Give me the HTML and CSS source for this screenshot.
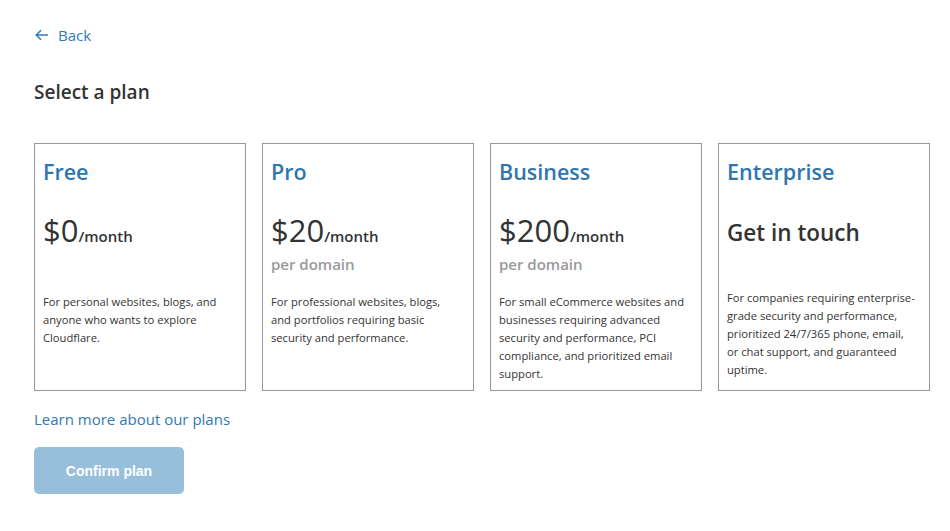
FILE: index.html
```html
<!DOCTYPE html>
<html lang="en">
<head>
    <meta charset="UTF-8">
    <title>Select a plan</title>
    <link rel="stylesheet" href="styles.css">
</head>
<body>
    <div class="page">
        <a class="back" href="#">
            <svg width="14" height="12" viewBox="0 0 14 12"><path d="M6 1.2L1.2 6L6 10.8M1.2 6H13" fill="none" stroke="currentColor" stroke-width="1.5"/></svg>
            <span>Back</span>
        </a>

        <h1>Select a plan</h1>

        <div class="plans">
            <!-- Free -->
            <div class="plan">
                <h2>Free</h2>
                <div class="price"><span class="amount">$0</span><span class="per">/month</span></div>
                <div class="domain"></div>
                <p>For personal websites, blogs, and anyone who wants to explore Cloudflare.</p>
            </div>

            <!-- Pro -->
            <div class="plan">
                <h2>Pro</h2>
                <div class="price"><span class="amount">$20</span><span class="per">/month</span></div>
                <div class="domain">per domain</div>
                <p>For professional websites, blogs, and portfolios requiring basic security and performance.</p>
            </div>

            <!-- Business -->
            <div class="plan">
                <h2>Business</h2>
                <div class="price"><span class="amount">$200</span><span class="per">/month</span></div>
                <div class="domain">per domain</div>
                <p>For small eCommerce websites and businesses requiring advanced security and performance, PCI compliance, and prioritized email support.</p>
            </div>

            <!-- Enterprise -->
            <div class="plan enterprise">
                <h2>Enterprise</h2>
                <div class="price"><span class="touch">Get in touch</span></div>
                <div class="domain"></div>
                <p>For companies requiring enterprise-grade security and performance, prioritized 24/7/365 phone, email, or chat support, and guaranteed uptime.</p>
            </div>
        </div>

        <a class="learn" href="#">Learn more about our plans</a>

        <button class="confirm" disabled>Confirm plan</button>
    </div>
</body>
</html>
```

FILE: styles.css
```css
body {
    margin: 0;
    font-family: "Open Sans", "Noto Sans", sans-serif;
    color: #333;
    background: #fff;
}

.page {
    padding: 24px 20px 24px 34px;
}

.back {
    display: inline-flex;
    align-items: center;
    gap: 9px;
    color: #2f7bbf;
    text-decoration: none;
    font-size: 15px;
    margin-left: 1px;
    margin-top: -1px;
}

h1 {
    font-size: 19px;
    font-weight: 600;
    margin: 33px 0 38px;
    color: #333;
}

.plans {
    display: flex;
    gap: 16px;
}

.plan {
    flex: 0 0 212px;
    height: 248px;
    box-sizing: border-box;
    border: 1px solid #999;
    padding: 10px 8px 10px;
}

.plan h2 {
    margin: 0;
    font-size: 21.5px;
    font-weight: 600;
    line-height: 36px;
    color: #2f76ad;
}

.price {
    margin-top: 20px;
    height: 40px;
    display: flex;
    align-items: baseline;
}

.enterprise .price {
    margin-top: 23px;
}

.amount {
    font-size: 31px;
    line-height: 40px;
}

.per {
    font-size: 15px;
    font-weight: 600;
}

.touch {
    font-size: 22.5px;
    font-weight: 600;
    line-height: 40px;
}

.domain {
    height: 28px;
    font-size: 15px;
    font-weight: 600;
    color: #999;
    line-height: 28px;
}

.plan p {
    margin: 15px 0 0;
    padding-right: 6px;
    font-size: 11.2px;
    line-height: 18px;
    color: #333;
}

.enterprise p {
    margin-top: 8px;
}

.learn {
    display: block;
    margin-top: 18px;
    font-size: 15px;
    color: #3479b0;
    text-decoration: none;
}

.confirm {
    margin-top: 18px;
    width: 150px;
    height: 47px;
    border: none;
    border-radius: 5px;
    background: #97bedb;
    color: #fff;
    font-family: "Liberation Sans", Arial, sans-serif;
    font-size: 14px;
    font-weight: bold;
}
```
